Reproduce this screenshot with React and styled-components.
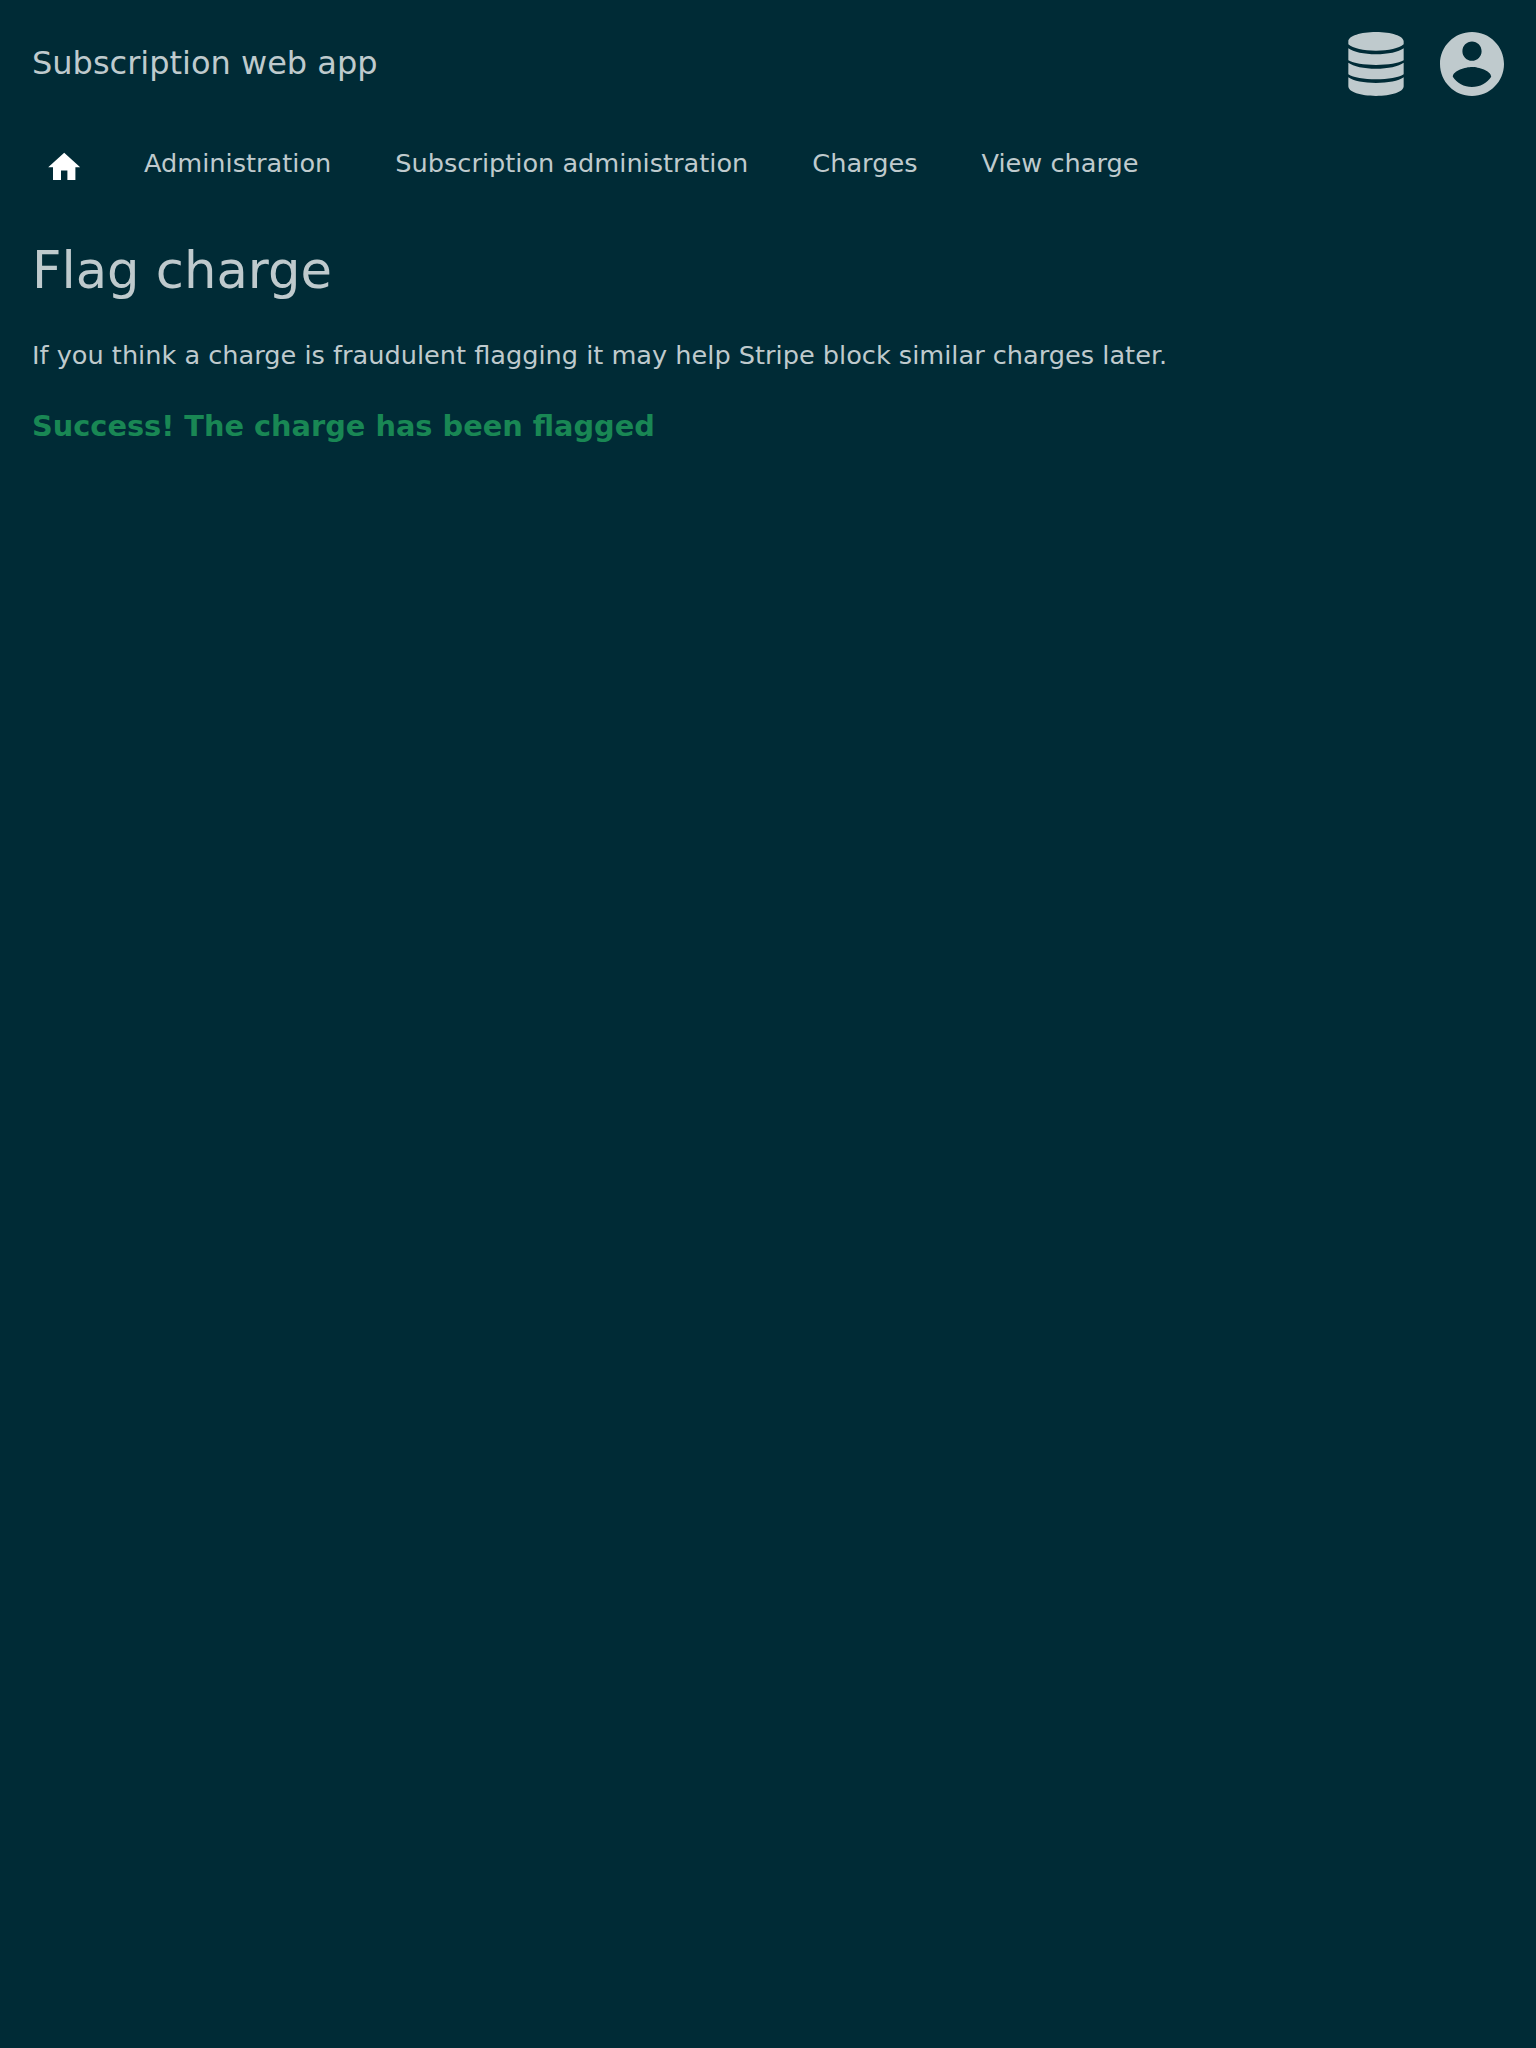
import React from "react";
import styled, { createGlobalStyle } from "styled-components";

const GlobalStyle = createGlobalStyle`
  body {
    margin: 0;
    background: #002b36;
    color: #bfcacd;
    font-family: "DejaVu Sans", sans-serif;
    font-size: 25.6px;
  }
`;

const Page = styled.div`
  min-height: 2048px;
`;

const Header = styled.header`
  display: flex;
  justify-content: space-between;
  padding: 32px 32px 0;
`;

const AppTitle = styled.div`
  font-size: 32px;
  line-height: 62px;
`;

const Actions = styled.div`
  display: flex;
  gap: 32px;
`;

const Icon = styled.svg`
  display: block;
  width: ${(p) => p.$size}px;
  height: ${(p) => p.$size}px;
  fill: ${(p) => p.$color || "currentColor"};
`;

const Nav = styled.nav`
  display: flex;
  align-items: flex-start;
  height: 70px;
  padding: 32px 0 0 44.8px;
`;

const Crumb = styled.a`
  line-height: 70px;
  margin-right: 64px;
`;

const HomeLink = styled.a`
  margin: 19.5px 60.8px 0 0;
`;

const Main = styled.main`
  padding: 0 32px;
`;

const Heading = styled.h1`
  margin: 42px 0 0;
  font-size: 51.2px;
  font-weight: 400;
  line-height: 60px;
`;

const Text = styled.p`
  margin: 40px 0 0;
  line-height: 30px;
`;

const Success = styled.p`
  margin: 40px 0 0;
  font-size: 28.8px;
  font-weight: 700;
  line-height: 32px;
  color: #198754;
`;

const crumbs = ["Administration", "Subscription administration", "Charges", "View charge"];

export default function App() {
  return (
    <Page>
      <GlobalStyle />
      <Header>
        <AppTitle>Subscription web app</AppTitle>
        <Actions>
          <Icon $size={64} viewBox="0 0 192 192">
            <path d="M13 28C13 12 50 0 96 0s83 12 83 28v9C165 49 134 56 96 56S27 49 13 37zM13 49c15 11 47 18 83 18s68-7 83-18v36c-15 9-47 14-83 14s-68-5-83-14zM13 92c15 11 47 18 83 18s68-7 83-18v35c-15 10-47 15-83 15s-68-5-83-15zM13 136c15 11 47 17 83 17s68-6 83-17v27c0 17-37 29-83 29s-83-12-83-29z" />
          </Icon>
          <Icon $size={64} viewBox="2 2 20 20">
            <path d="M12 2C6.48 2 2 6.48 2 12s4.48 10 10 10 10-4.48 10-10S17.52 2 12 2zm0 3c1.66 0 3 1.34 3 3s-1.34 3-3 3-3-1.34-3-3 1.34-3 3-3zm0 14.2c-2.5 0-4.71-1.28-6-3.22.03-1.99 4-3.08 6-3.08 1.99 0 5.97 1.09 6 3.08-1.29 1.94-3.5 3.22-6 3.22z" />
          </Icon>
        </Actions>
      </Header>
      <Nav>
        <HomeLink>
          <Icon $size={38.4} $color="#fff" viewBox="0 0 24 24">
            <path d="M10 20v-6h4v6h5v-8h3L12 3 2 12h3v8z" />
          </Icon>
        </HomeLink>
        {crumbs.map((c) => (
          <Crumb key={c}>{c}</Crumb>
        ))}
      </Nav>
      <Main>
        <Heading>Flag charge</Heading>
        <Text>If you think a charge is fraudulent flagging it may help Stripe block similar charges later.</Text>
        <Success>Success! The charge has been flagged</Success>
      </Main>
    </Page>
  );
}
